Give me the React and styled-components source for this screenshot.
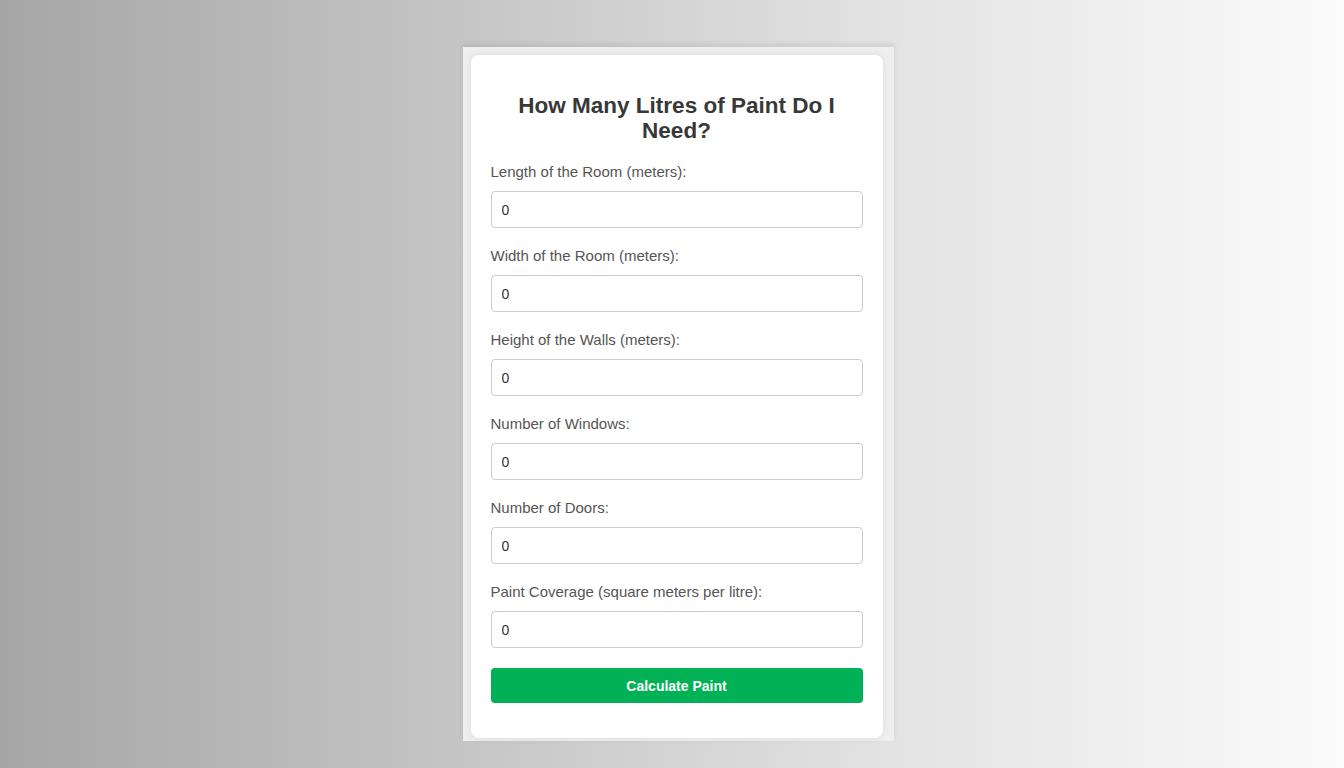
import React from "react";
import styled, { createGlobalStyle } from "styled-components";

const GlobalStyle = createGlobalStyle`
  html, body {
    margin: 0;
    padding: 0;
  }
  body {
    font-family: "Liberation Sans", Arial, sans-serif;
    background: linear-gradient(to right, #a6a6a6 0%, #c6c6c6 35%, #e2e2e2 65%, #fbfbfb 100%);
    min-height: 768px;
  }
`;

const Page = styled.div`
  width: 100%;
  min-height: 768px;
  display: flex;
  justify-content: center;
  align-items: flex-start;
  padding: 47px 0 0 12px;
  box-sizing: border-box;
`;

const Frame = styled.div`
  width: 431px;
  box-sizing: border-box;
  padding: 8px 11px 3px 8px;
  background-color: #efefef;
  box-shadow: 0 -3px 5px rgba(0, 0, 0, 0.08);
`;

const Card = styled.div`
  background-color: #ffffff;
  border-radius: 8px;
  padding: 20px 20px 35px 20px;
  box-shadow: 0 0 8px rgba(0, 0, 0, 0.08);
`;

const Title = styled.h2`
  font-size: 22.5px;
  font-weight: bold;
  line-height: 25px;
  color: #383838;
  text-align: center;
  margin: 18px 0 21px 0;
`;

const Field = styled.div`
  display: flex;
  flex-direction: column;
  margin-bottom: 20px;
`;

const Label = styled.label`
  font-size: 15px;
  line-height: 16px;
  color: #555555;
  margin-bottom: 11px;
`;

const Input = styled.input`
  height: 37px;
  box-sizing: border-box;
  padding: 0 10px;
  border: 1px solid #cccccc;
  border-radius: 4px;
  font-family: "Liberation Sans", Arial, sans-serif;
  font-size: 14px;
  color: #333333;
  outline: none;
`;

const Button = styled.button`
  width: 100%;
  height: 35px;
  border: none;
  border-radius: 4px;
  background-color: #00b156;
  color: #ffffff;
  font-family: "Liberation Sans", Arial, sans-serif;
  font-size: 14px;
  font-weight: bold;
  cursor: pointer;
`;

const fields = [
  "Length of the Room (meters):",
  "Width of the Room (meters):",
  "Height of the Walls (meters):",
  "Number of Windows:",
  "Number of Doors:",
  "Paint Coverage (square meters per litre):",
];

const App = () => {
  return (
    <>
      <GlobalStyle />
      <Page>
        <Frame>
          <Card>
            <Title>How Many Litres of Paint Do I Need?</Title>
            {fields.map((label, i) => (
              <Field key={i}>
                <Label htmlFor={`f${i}`}>{label}</Label>
                <Input id={`f${i}`} type="number" defaultValue={0} />
              </Field>
            ))}
            <Button>Calculate Paint</Button>
          </Card>
        </Frame>
      </Page>
    </>
  );
};

export default App;
